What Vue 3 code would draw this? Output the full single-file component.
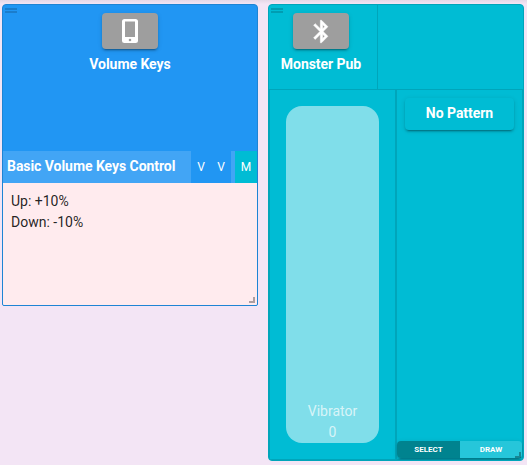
<script setup>
const controls = ['Up: +10%', 'Down: -10%']
</script>

<template>
  <main class="board">
    <section class="card keys">
      <svg class="grip" viewBox="0 0 12 5"><path d="M0 0h12v2H0zM0 3h12v2H0z" /></svg>
      <header class="device">
        <button class="icon-btn">
          <svg class="phone" viewBox="0 0 16 24"><path fill-rule="evenodd" d="M2.500 0h11A2.500 2.500 0 0 1 16 2.500v19a2.500 2.500 0 0 1-2.500 2.500h-11A2.500 2.500 0 0 1 0 21.500v-19A2.500 2.500 0 0 1 2.500 0zM3 2.500v15.500h10V2.500zM8 19.700a1.300 1.300 0 1 0 0 2.600 1.300 1.300 0 0 0 0-2.600z" /></svg>
        </button>
        <span class="name">Volume Keys</span>
      </header>
      <div class="bar">
        <span class="title">Basic Volume Keys Control</span>
        <div class="pair"><span>V</span><span>V</span></div>
        <span class="m">M</span>
      </div>
      <div class="body">
        <div v-for="c in controls" :key="c">{{ c }}</div>
      </div>
      <svg class="resize" viewBox="0 0 6 6"><path d="M4 0h2v6H0V4h4z" /></svg>
    </section>

    <section class="card pub">
      <svg class="grip" viewBox="0 0 12 5"><path d="M0 0h12v2H0zM0 3h12v2H0z" /></svg>
      <div class="top">
        <header class="device">
          <button class="icon-btn">
            <svg class="bluetooth" viewBox="0 0 24 24"><path d="M17.710 7.710 12 2h-1v7.590L6.410 5 5 6.410 10.590 12 5 17.590 6.410 19 11 14.410V22h1l5.710-5.710-4.300-4.290 4.300-4.290zM13 5.830l1.880 1.880L13 9.590V5.830zm1.880 10.460L13 18.170v-3.760l1.880 1.880z" /></svg>
          </button>
          <span class="name">Monster Pub</span>
        </header>
      </div>
      <div class="panels">
        <div class="panel left">
          <div class="slider"><span>Vibrator</span><span>0</span></div>
        </div>
        <div class="panel right">
          <button class="pattern">No Pattern</button>
          <div class="modes"><button class="select">SELECT</button><button class="draw">DRAW</button></div>
        </div>
      </div>
      <svg class="resize" viewBox="0 0 6 6"><path d="M4 0h2v6H0V4h4z" /></svg>
    </section>
  </main>
</template>

<style>
body { margin: 0; background: #f3e5f5; }
</style>

<style scoped>
* { box-sizing: border-box; }
.board {
  display: flex;
  align-items: flex-start;
  gap: 10px;
  height: 465px;
  padding: 4px 3px 0 2px;
  overflow: hidden;
  background: linear-gradient(#e5d8e7, #f3e5f5 4px);
  font: 14px/21px Roboto, sans-serif;
  color: #fff;
}
button { border: 0; padding: 0; font: inherit; color: inherit; }
.card {
  position: relative;
  display: flex;
  flex-direction: column;
  width: 256px;
  flex: none;
  border-radius: 4px;
  overflow: hidden;
}
.keys { height: 302px; background: #2196f3; border: 1px solid #1e84d4; border-radius: 4px 4px 2px 2px; }
.pub { height: 457px; background: #00bcd4; border: 1px solid #00a5ba; }
.grip { position: absolute; left: 2px; top: 3px; width: 12px; height: 5px; fill: rgba(0, 0, 0, .16); }
.resize { position: absolute; right: 2px; bottom: 2px; width: 6px; height: 6px; fill: rgba(0, 0, 0, .32); }
.device { display: flex; flex-direction: column; align-items: center; padding-top: 8px; }
.keys .device { height: 146px; }
.icon-btn {
  display: flex;
  align-items: center;
  justify-content: center;
  width: 56px;
  height: 36px;
  border-radius: 4px;
  background: #9e9e9e;
  box-shadow: 0 3px 1px -2px rgba(0, 0, 0, .2), 0 2px 2px rgba(0, 0, 0, .14), 0 1px 5px rgba(0, 0, 0, .12);
}
.icon-btn svg { fill: #fff; }
.phone { width: 16px; height: 24px; }
.bluetooth { width: 27px; height: 27px; stroke: #fff; stroke-width: .5; }
.name { margin-top: 5px; font-weight: 700; letter-spacing: -.04px; }
.bar { display: flex; height: 32px; line-height: 30px; background: #42a5f5; }
.title { width: 188px; padding-left: 4px; font-weight: 700; letter-spacing: -.05px; white-space: nowrap; }
.pair { display: flex; width: 40px; background: #2196f3; }
.pair span { width: 20px; text-align: center; }
.pair span, .m { font-size: 12px; line-height: 32px; }
.m { width: 22px; margin-left: 4px; text-align: center; background: #00bcd4; }
.body { flex: 1; padding: 8px; background: #ffebee; color: rgba(0, 0, 0, .87); }
.top { height: 84px; }
.top .device { width: 109px; height: 84px; border-right: 1px solid #00a5ba; padding-right: 4px; }
.panels { display: flex; flex: 1; }
.panel { width: 127px; border: 1px solid #00a5ba; }
.left { padding: 16px; }
.slider {
  display: flex;
  flex-direction: column;
  justify-content: flex-end;
  align-items: center;
  height: 337px;
  border-radius: 16px;
  background: #80deea;
  color: rgba(255, 255, 255, .7);
}
.right { display: flex; flex-direction: column; justify-content: space-between; }
.pattern {
  width: 109px;
  height: 32px;
  margin: 8px;
  padding-bottom: 2px;
  border-radius: 4px;
  background: #00bcd4;
  font-weight: 700;
  letter-spacing: -.04px;
  box-shadow: 0 3px 1px -2px rgba(0, 0, 0, .2), 0 2px 2px rgba(0, 0, 0, .14), 0 1px 5px rgba(0, 0, 0, .12);
}
.modes {
  display: flex;
  height: 17px;
  margin-bottom: 1px;
  border-radius: 4px;
  box-shadow: 0 3px 1px -2px rgba(0, 0, 0, .2), 0 2px 2px rgba(0, 0, 0, .14), 0 1px 5px rgba(0, 0, 0, .12);
}
.modes button { font-size: 8px; line-height: 17px; font-weight: 700; }
.select { width: 63px; background: #00838f; border-radius: 4px 0 0 4px; }
.draw { flex: 1; background: #26c6da; border-radius: 0 4px 4px 0; }
</style>
